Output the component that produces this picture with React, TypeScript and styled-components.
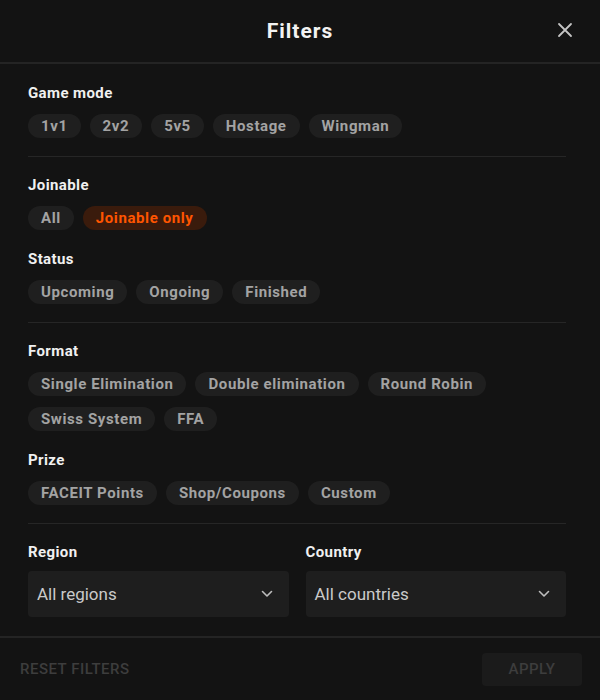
import styled, { createGlobalStyle } from "styled-components";
import { useState } from "react";

const GlobalStyle = createGlobalStyle`
  html, body {
    margin: 0;
    padding: 0;
    background: #131313;
  }
  * {
    box-sizing: border-box;
  }
`;

const Panel = styled.div`
  width: 600px;
  height: 700px;
  background: #131313;
  display: flex;
  flex-direction: column;
  font-family: Roboto, "Noto Sans", sans-serif;
  color: #fff;
  overflow: hidden;
`;

const Header = styled.div`
  height: 64px;
  display: flex;
  align-items: center;
  justify-content: center;
  position: relative;
  border-bottom: 2px solid #242424;
  flex-shrink: 0;
`;

const Title = styled.h1`
  margin: 0;
  font-size: 21px;
  font-weight: 700;
  letter-spacing: 1px;
  color: #f2f2f2;
`;

const CloseButton = styled.button`
  position: absolute;
  right: 26px;
  top: 21px;
  width: 18px;
  height: 18px;
  padding: 0;
  border: none;
  background: none;
  cursor: pointer;
  display: flex;
  align-items: center;
  justify-content: center;
`;

const Body = styled.div`
  flex: 1;
  min-height: 0;
  padding: 21px 34px 0 28px;
  display: flex;
  flex-direction: column;
`;

const Section = styled.div`
  display: flex;
  flex-direction: column;
  gap: 21px;
  padding: 0 0 18px;
  border-bottom: 1px solid #262626;
  margin-bottom: 20px;

  &:last-child {
    border-bottom: none;
    margin-bottom: 0;
  }
`;

const Group = styled.div<{ $gap?: number }>`
  display: flex;
  flex-direction: column;
  gap: ${(p) => p.$gap ?? 13}px;
`;

const Label = styled.div`
  font-size: 15px;
  font-weight: 700;
  letter-spacing: 0.4px;
  color: #f0f0f0;
  line-height: 16px;
`;

const ChipRow = styled.div`
  display: flex;
  flex-wrap: wrap;
  column-gap: 9px;
  row-gap: 11px;
`;

const Chip = styled.button<{ $active?: boolean }>`
  height: 24px;
  padding: 0 13px;
  border: none;
  border-radius: 12px;
  font-family: inherit;
  font-size: 15px;
  font-weight: 700;
  letter-spacing: 0.6px;
  background: ${(p) => (p.$active ? "#3a1b0c" : "#1f1f1f")};
  color: ${(p) => (p.$active ? "#ff5500" : "#a3a3a3")};
  cursor: pointer;
  display: flex;
  align-items: center;
`;

const SelectGrid = styled.div`
  display: grid;
  grid-template-columns: 1fr 1fr;
  column-gap: 17px;
`;

const SelectBox = styled.div`
  height: 46px;
  background: #1e1e1e;
  border-radius: 4px;
  display: flex;
  align-items: center;
  justify-content: space-between;
  padding: 0 16px 0 9px;
  font-size: 17px;
  color: #cacaca;
  cursor: pointer;
`;

const Footer = styled.div`
  height: 64px;
  border-top: 2px solid #242424;
  display: flex;
  align-items: center;
  justify-content: space-between;
  padding: 0 18px 0 20px;
  flex-shrink: 0;
`;

const ResetButton = styled.button`
  border: none;
  background: none;
  padding: 0;
  font-family: inherit;
  font-size: 15px;
  font-weight: 500;
  letter-spacing: 0.5px;
  color: #3d3d3d;
  text-transform: uppercase;
`;

const ApplyButton = styled.button`
  width: 100px;
  height: 33px;
  border: none;
  border-radius: 4px;
  background: #1b1b1b;
  font-family: inherit;
  font-size: 15px;
  font-weight: 500;
  letter-spacing: 0.5px;
  color: #3d3d3d;
  text-transform: uppercase;
`;

const Chevron = () => (
  <svg width="12" height="8" viewBox="0 0 12 8" fill="none">
    <path d="M1.5 1.5 6 6l4.5-4.5" stroke="#bdbdbd" strokeWidth="1.6" strokeLinecap="round" strokeLinejoin="round" />
  </svg>
);

const ChipGroup = ({ label, options, initial }: { label: string; options: string[]; initial?: string }) => {
  const [selected, setSelected] = useState<string | undefined>(initial);
  return (
    <Group>
      <Label>{label}</Label>
      <ChipRow>
        {options.map((o) => (
          <Chip key={o} $active={selected === o} onClick={() => setSelected(selected === o ? undefined : o)}>
            {o}
          </Chip>
        ))}
      </ChipRow>
    </Group>
  );
};

const App = () => {
  return (
    <>
      <GlobalStyle />
      <Panel>
        <Header>
          <Title>Filters</Title>
          <CloseButton aria-label="Close">
            <svg width="16" height="16" viewBox="0 0 16 16" fill="none">
              <path d="M2 2l12 12M14 2 2 14" stroke="#c4c4c4" strokeWidth="1.8" strokeLinecap="round" />
            </svg>
          </CloseButton>
        </Header>
        <Body>
          <Section>
            <ChipGroup label="Game mode" options={["1v1", "2v2", "5v5", "Hostage", "Wingman"]} />
          </Section>
          <Section>
            <ChipGroup label="Joinable" options={["All", "Joinable only"]} initial="Joinable only" />
            <ChipGroup label="Status" options={["Upcoming", "Ongoing", "Finished"]} />
          </Section>
          <Section>
            <ChipGroup
              label="Format"
              options={["Single Elimination", "Double elimination", "Round Robin", "Swiss System", "FFA"]}
            />
            <ChipGroup label="Prize" options={["FACEIT Points", "Shop/Coupons", "Custom"]} />
          </Section>
          <Section>
            <SelectGrid>
              <Group $gap={11}>
                <Label>Region</Label>
                <SelectBox>
                  All regions
                  <Chevron />
                </SelectBox>
              </Group>
              <Group $gap={11}>
                <Label>Country</Label>
                <SelectBox>
                  All countries
                  <Chevron />
                </SelectBox>
              </Group>
            </SelectGrid>
          </Section>
        </Body>
        <Footer>
          <ResetButton>Reset filters</ResetButton>
          <ApplyButton>Apply</ApplyButton>
        </Footer>
      </Panel>
    </>
  );
};

export default App;
